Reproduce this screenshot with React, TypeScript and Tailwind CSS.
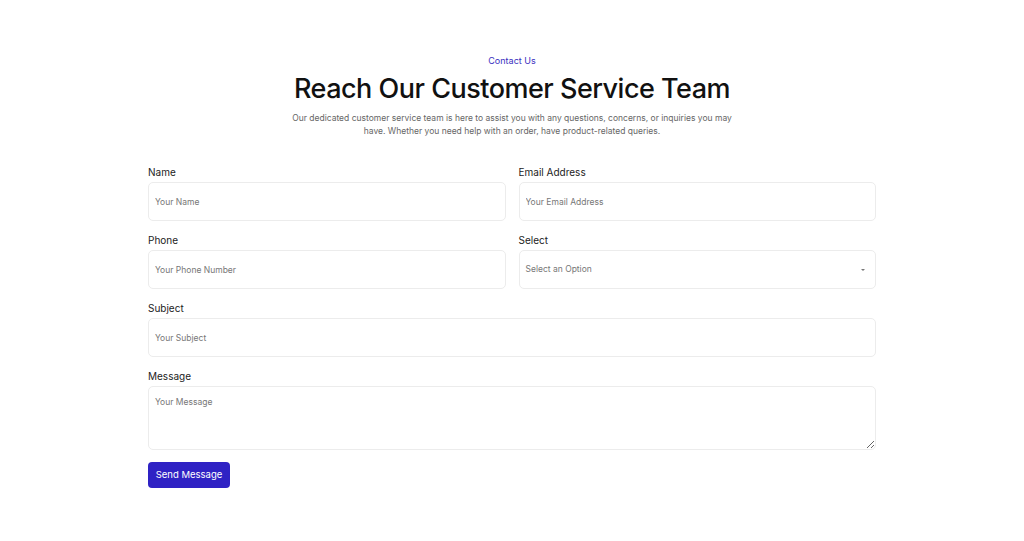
import React from "react";

function Field({ label, placeholder }: { label: string; placeholder: string }) {
  return (
    <div className="flex flex-col">
      <label className="text-[10px] leading-[12px] text-[#222]">{label}</label>
      <input
        className="mt-[4px] h-[39px] rounded-[5px] border border-[#ececec] px-[6px] text-[8.5px] text-[#333] placeholder:text-[#777] outline-none"
        placeholder={placeholder}
      />
    </div>
  );
}

export default function App() {
  return (
    <div
      className="min-h-[541px] w-full bg-white"
      style={{ fontFamily: "Inter, 'Noto Sans', sans-serif" }}
    >
      <div className="mx-auto w-[728px] pt-[55px]">
        <div className="flex flex-col items-center text-center">
          <p className="text-[9px] leading-[12px] text-[#3a2fc0]">Contact Us</p>
          <h1 className="mt-[5px] text-[27px] leading-[34px] font-medium tracking-[-0.5px] text-[#111]">
            Reach Our Customer Service Team
          </h1>
          <p className="mt-[6px] w-[445px] text-[8.5px] leading-[13px] text-[#666]">
            Our dedicated customer service team is here to assist you with any questions, concerns, or inquiries you may
            have. Whether you need help with an order, have product-related queries.
          </p>
        </div>

        <form className="mt-[28px] flex flex-col gap-[13px]" onSubmit={(e) => e.preventDefault()}>
          <div className="grid grid-cols-2 gap-x-[13px] gap-y-[13px]">
            <Field label="Name" placeholder="Your Name" />
            <Field label="Email Address" placeholder="Your Email Address" />
            <Field label="Phone" placeholder="Your Phone Number" />
            <div className="flex flex-col">
              <label className="text-[10px] leading-[12px] text-[#222]">Select</label>
              <div className="mt-[4px] flex h-[39px] items-center justify-between rounded-[5px] border border-[#ececec] px-[6px]">
                <span className="text-[8.5px] text-[#777]">Select an Option</span>
                <span className="mr-[4px] h-0 w-0 border-x-[2px] border-t-[2px] border-x-transparent border-t-[#777]" />
              </div>
            </div>
          </div>
          <Field label="Subject" placeholder="Your Subject" />
          <div className="flex flex-col">
            <label className="text-[10px] leading-[12px] text-[#222]">Message</label>
            <textarea
              className="mt-[4px] block h-[64px] rounded-[5px] border border-[#ececec] px-[6px] py-[9px] text-[8.5px] text-[#333] placeholder:text-[#777] outline-none"
              placeholder="Your Message"
            />
          </div>
          <div className="-mt-[1px] flex">
            <button
              type="submit"
              className="block h-[26px] w-[82px] rounded-[4px] bg-[#2f22c4] text-[9.5px] text-white"
            >
              Send Message
            </button>
          </div>
        </form>
      </div>
    </div>
  );
}
